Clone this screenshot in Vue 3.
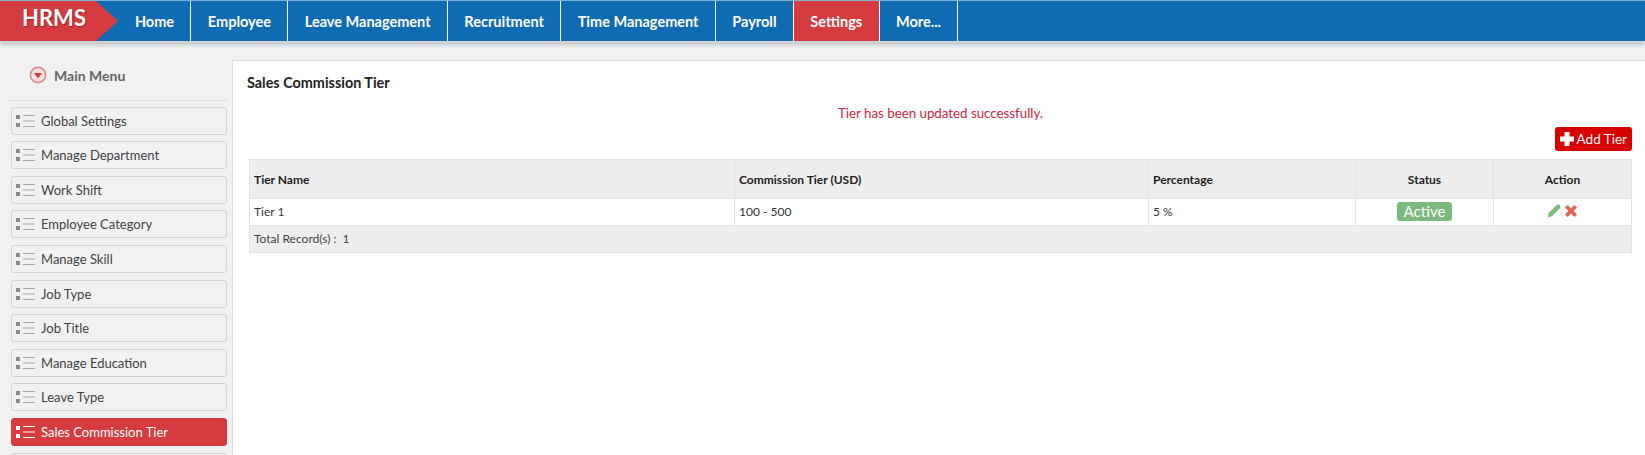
<template>
  <div class="page">
    <header class="topbar">
      <div class="brand">HRMS</div>
      <nav class="nav">
        <a
          v-for="item in navItems"
          :key="item"
          class="nav-item"
          :class="{ active: item === 'Settings' }"
        >{{ item }}</a>
      </nav>
    </header>

    <div class="body">
      <aside class="sidebar">
        <div class="menu-title">
          <svg class="menu-icon" width="18" height="18" viewBox="0 0 18 18">
            <circle cx="9" cy="9" r="7.6" fill="#f7e4e4" stroke="#e08a8a" stroke-width="1.6" />
            <path d="M4.800 7h8.400L9 12.200z" fill="#d63b40" />
          </svg>
          <span>Main Menu</span>
        </div>
        <ul class="menu">
          <li
            v-for="item in menuItems"
            :key="item"
            class="menu-item"
            :class="{ current: item === 'Sales Commission Tier' }"
          >
            <svg class="list-icon" width="19" height="12" viewBox="0 0 19 12">
              <rect class="dot" x="0" y="0" width="4" height="4" />
              <rect class="dot" x="0" y="8" width="4" height="4" />
              <rect class="line" x="7" y="0" width="12" height="1" />
              <rect class="line" x="7" y="5.500" width="12" height="1" />
              <rect class="line" x="7" y="11" width="12" height="1" />
            </svg>
            <span>{{ item }}</span>
          </li>
          <li class="menu-item"></li>
        </ul>
      </aside>

      <main class="content">
        <h1 class="title">Sales Commission Tier</h1>
        <p class="message">Tier has been updated successfully.</p>
        <div class="toolbar">
          <button class="add-btn">
            <svg width="16" height="16" viewBox="0 0 16 16">
              <path d="M5.500 1h5v4.500h4.500v5h-4.500v4.500h-5v-4.500h-4.500v-5h4.500z" fill="#fff" />
            </svg>
            Add Tier
          </button>
        </div>
        <table class="grid">
          <colgroup>
            <col class="c-name" />
            <col class="c-tier" />
            <col class="c-pct" />
            <col class="c-status" />
            <col class="c-action" />
          </colgroup>
          <thead>
            <tr>
              <th>Tier Name</th>
              <th>Commission Tier (USD)</th>
              <th>Percentage</th>
              <th class="center">Status</th>
              <th class="center">Action</th>
            </tr>
          </thead>
          <tbody>
            <tr>
              <td>Tier 1</td>
              <td>100 - 500</td>
              <td>5 %</td>
              <td class="center"><span class="badge">Active</span></td>
              <td class="center actions">
                <svg width="15" height="14" viewBox="0 0 15 14">
                  <path d="M1.500 9 9.500 1.200c1-.9 2.400-.9 3.300 0s.9 2.200 0 3.100L5 12.300 1 13.500z" fill="#7dbb7f" />
                </svg>
                <svg width="14" height="14" viewBox="0 0 14 14">
                  <path d="M3.600 1 7 4.400 10.400 1 13 3.600 9.600 7 13 10.400 10.400 13 7 9.600 3.600 13 1 10.400 4.400 7 1 3.600z" fill="#e2654f" />
                </svg>
              </td>
            </tr>
          </tbody>
          <tfoot>
            <tr>
              <td colspan="5">Total Record(s) :&nbsp; 1</td>
            </tr>
          </tfoot>
        </table>
      </main>
    </div>
  </div>
</template>

<script setup>
const navItems = [
  'Home',
  'Employee',
  'Leave Management',
  'Recruitment',
  'Time Management',
  'Payroll',
  'Settings',
  'More...'
]

const menuItems = [
  'Global Settings',
  'Manage Department',
  'Work Shift',
  'Employee Category',
  'Manage Skill',
  'Job Type',
  'Job Title',
  'Manage Education',
  'Leave Type',
  'Sales Commission Tier'
]
</script>

<style>
html,
body {
  margin: 0;
  height: 100%;
  overflow: hidden;
  background: #f1f1f1;
}
</style>

<style scoped>
.page {
  height: 455px;
  overflow: hidden;
  font-family: Lato, "Open Sans", sans-serif;
  color: #333;
  display: flex;
  flex-direction: column;
}

.topbar {
  display: flex;
  height: 40px;
  background: #0f6cb2;
  border-top: 1px solid #7fb0d6;
  border-bottom: 1px solid #cfd8df;
  box-shadow: 0 3px 4px rgba(0, 0, 0, 0.18);
  flex-shrink: 0;
}

.brand {
  width: 118.500px;
  height: 40px;
  box-sizing: border-box;
  padding: 2px 0 0 22px;
  background: #d63b40;
  clip-path: polygon(0 0, 96px 0, 118px 50%, 96px 100%, 0 100%);
  color: #fff;
  font-size: 22px;
  font-weight: 700;
  line-height: 30px;
  text-shadow: 1px 1px 1px rgba(90, 0, 0, 0.5);
}

.nav {
  display: flex;
}

.nav-item {
  padding: 0 16.400px;
  line-height: 42px;
  border-right: 1px solid #fff;
  color: #fff;
  font-size: 14.500px;
  font-weight: 700;
}

.nav-item.active {
  background: #d63b40;
}

.body {
  display: flex;
  flex: 1;
  min-height: 0;
  padding-top: 18px;
}

.sidebar {
  width: 232px;
  flex-shrink: 0;
  box-sizing: border-box;
  padding: 0 5px 0 11px;
}

.menu-title {
  display: flex;
  align-items: center;
  gap: 7px;
  height: 30px;
  margin: 0 0 5.700px -1px;
  padding: 0 0 10px 19px;
  border-bottom: 1px solid #dedede;
  color: #666;
  font-size: 14px;
  font-weight: 700;
}

.menu {
  list-style: none;
  margin: 0;
  padding: 0;
  display: flex;
  flex-direction: column;
  gap: 6.600px;
}

.menu-item {
  display: flex;
  align-items: center;
  gap: 6px;
  flex-shrink: 0;
  height: 28px;
  box-sizing: border-box;
  padding-left: 4px;
  background: #f1f1f1;
  border: 1px solid #d2d2d2;
  border-radius: 3px;
  color: #444;
  font-size: 13px;
}

.list-icon .dot {
  fill: #8a8a8a;
}

.list-icon .line {
  fill: #a8a8a8;
}

.menu-item.current {
  background: #d63b40;
  border-color: #d63b40;
  color: #fff;
}

.menu-item.current .dot,
.menu-item.current .line {
  fill: #fff;
}

.content {
  flex: 1;
  box-sizing: border-box;
  padding: 13px 13px 0 16px;
  background: #fff;
  border-top: 1px solid #d9d9d9;
  border-left: 1px solid #dcdcdc;
}

.title {
  margin: 0 0 0 -2px;
  font-size: 14.400px;
  font-weight: 700;
  line-height: 17px;
  color: #222;
}

.message {
  margin: 14px 0 0;
  text-align: center;
  color: #c8253c;
  font-size: 13.300px;
  line-height: 17px;
}

.toolbar {
  display: flex;
  justify-content: flex-end;
  margin-top: 5px;
}

.add-btn {
  display: flex;
  align-items: center;
  gap: 2px;
  height: 24px;
  padding: 0 5px 0 4px;
  background: #d90000;
  border: none;
  border-radius: 3px;
  color: #fff;
  font-family: inherit;
  font-size: 13.500px;
}

.grid {
  width: 100%;
  margin-top: 8px;
  border-collapse: collapse;
  table-layout: fixed;
  font-size: 12px;
}

.c-name { width: 485px; }
.c-tier { width: 414px; }
.c-pct { width: 207px; }
.c-status { width: 138px; }

.grid th,
.grid td {
  padding: 0 4px;
  border: 1px solid #e3e3e3;
  text-align: left;
}

.grid th {
  height: 39px;
  box-sizing: border-box;
  background: #eeeeee;
  color: #222;
  font-weight: 700;
}

.grid tbody td {
  height: 27px;
  box-sizing: border-box;
  padding-bottom: 1px;
}

.grid tfoot td {
  height: 27px;
  box-sizing: border-box;
  padding-bottom: 2px;
  background: #eeeeee;
  color: #444;
}

.grid .center {
  text-align: center;
}

.badge {
  display: inline-block;
  width: 55px;
  height: 19px;
  border-radius: 3px;
  background: #7cb97e;
  color: #fff;
  font-size: 15px;
  line-height: 19px;
  vertical-align: middle;
}

.actions svg {
  margin: 0 1px 2px;
  vertical-align: middle;
}
</style>
